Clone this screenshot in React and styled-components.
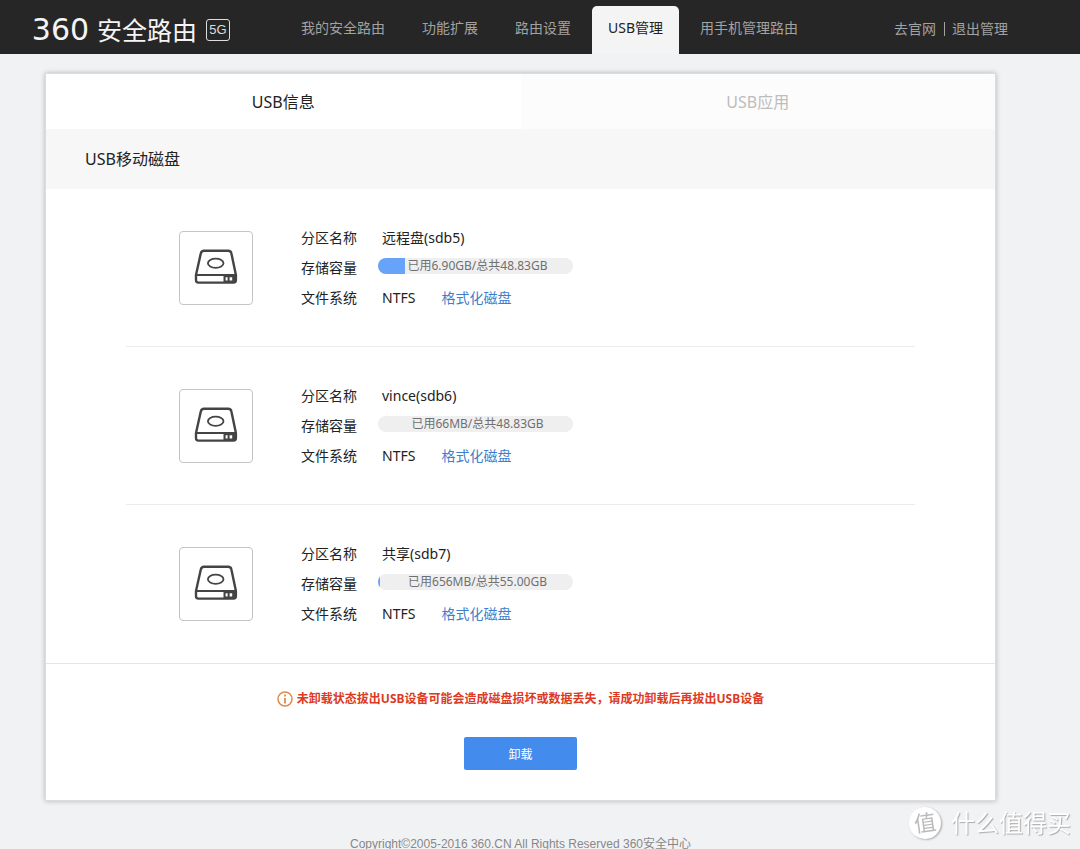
import React from "react";
import styled, { createGlobalStyle } from "styled-components";

const GlobalStyle = createGlobalStyle`
  *, *::before, *::after { box-sizing: border-box; }
  body {
    margin: 0;
    background: #f1f2f4;
    color: #222;
    font-family: "Noto Sans", "Noto Sans CJK SC", sans-serif;
    font-size: 14px;
  }
  button { font-family: inherit; border: 0; cursor: pointer; }
  a { text-decoration: none; }
`;

const Header = styled.header`
  display: flex;
  align-items: center;
  height: 54px;
  padding-left: 24px;
  background: #262626;
`;

const Logo = styled.a`
  display: flex;
  align-items: center;
  width: 261px;
  flex: none;
  color: #f4f4f4;
  line-height: 28px;
  padding-top: 6px;
`;

const LogoDigits = styled.span`
  width: 73px;
  text-align: center;
  font-family: "DejaVu Sans", sans-serif;
  font-size: 30px;
`;

const LogoName = styled.span`
  font-size: 25px;
`;

const LogoBadge = styled.span`
  margin-left: 9px;
  width: 24px;
  height: 22px;
  border: 1px solid #ddd;
  border-radius: 3px;
  color: #ddd;
  font-family: "Liberation Sans", sans-serif;
  font-size: 13px;
  line-height: 20px;
  text-align: center;
`;

const Nav = styled.nav`
  display: flex;
  align-self: flex-end;
  gap: 5px;
`;

const NavLink = styled.a`
  height: 48px;
  padding: 0 16px;
  border-radius: 5px 5px 0 0;
  line-height: 44px;
  white-space: nowrap;
  color: ${(p) => (p.$active ? "#222" : "#a2a2a2")};
  background: ${(p) => (p.$active ? "#f4f4f4" : "transparent")};
`;

const UserLinks = styled.div`
  display: flex;
  align-items: center;
  margin-left: auto;
  margin-right: 72px;
  padding-top: 4px;
`;

const UserLink = styled.a`
  color: #a2a2a2;
  line-height: 14px;
  white-space: nowrap;
  & + & {
    margin-left: 8px;
    padding-left: 7px;
    border-left: 1px solid #a2a2a2;
  }
`;

const Main = styled.main`
  margin: 19px 84px 0 45px;
`;

const Card = styled.section`
  background: #fff;
  border: 1px solid #dcdcdc;
  box-shadow: 0 0 5px rgba(0, 0, 0, 0.25);
`;

const Tabs = styled.div`
  display: grid;
  grid-template-columns: 1fr 1fr;
`;

const Tab = styled.button`
  height: 55px;
  padding: 0 0 2px;
  font-size: 16px;
  color: ${(p) => (p.$active ? "#222" : "#bdbdbd")};
  background: ${(p) => (p.$active ? "#fff" : "#fcfcfc")};
`;

const SectionTitle = styled.h2`
  margin: 0;
  padding: 0 39px;
  background: #f7f7f7;
  font-size: 16px;
  font-weight: 400;
  line-height: 60px;
`;

const DiskList = styled.ul`
  margin: 0;
  padding: 0 0 1px;
  list-style: none;
  border-bottom: 1px solid #e6e6e6;
`;

const DiskRow = styled.li`
  display: flex;
  align-items: center;
  margin: 0 80px;
  padding: 42px 53px 41px;
  & + & {
    border-top: 1px solid #ececec;
  }
`;

const DiskThumb = styled.div`
  display: flex;
  align-items: center;
  justify-content: center;
  width: 74px;
  height: 74px;
  margin-right: 48px;
  border: 1px solid #c4c4c4;
  border-radius: 4px;
`;

const Facts = styled.dl`
  display: grid;
  grid-template-columns: 77px 195px;
  align-items: center;
  margin: -8px 0;
  line-height: 30px;
`;

const Value = styled.dd`
  margin: 0;
  padding-left: ${(p) => (p.$flush ? 0 : 4)}px;
`;

const Meter = styled.div`
  position: relative;
  height: 16px;
  margin-bottom: 4px;
  border-radius: 8px;
  overflow: hidden;
  background: #efefef;
`;

const MeterFill = styled.div`
  position: absolute;
  inset: 0 auto 0 0;
  background: #67a3f8;
`;

const MeterText = styled.span`
  position: relative;
  display: block;
  padding-left: 4px;
  color: #707070;
  font-size: 12px;
  line-height: 15px;
  text-align: center;
  white-space: nowrap;
`;

const FormatLink = styled.a`
  margin-left: 26px;
  color: #3d7fcb;
`;

const Actions = styled.div`
  display: flex;
  flex-direction: column;
  align-items: center;
  gap: 29px;
  padding: 26px 0 30px;
`;

const Warning = styled.p`
  display: flex;
  align-items: center;
  gap: 4px;
  margin: 0;
  color: #dd3a24;
  font-size: 12px;
  font-weight: 700;
  line-height: 18px;
`;

const UnmountButton = styled.button`
  width: 113px;
  height: 33px;
  padding: 0;
  border-radius: 2px;
  background: #438bed;
  color: #fff;
  font-size: 12px;
`;

const Footer = styled.footer`
  margin: 35px 84px 0 45px;
  color: #888;
  font-family: "Liberation Sans", "Noto Sans CJK SC", sans-serif;
  font-size: 12px;
  line-height: 16px;
  text-align: center;
`;

const Watermark = styled.div`
  position: fixed;
  right: 9px;
  bottom: 10px;
  display: flex;
  align-items: center;
  gap: 10px;
  color: #fff;
  font-size: 24px;
  line-height: 32px;
  text-shadow: 1px 1px 1px #aaa;
`;

const WatermarkSeal = styled.span`
  width: 32px;
  height: 32px;
  border-radius: 50%;
  background: #fff;
  box-shadow: 1px 1px 2px #aaa;
  color: #bbb;
  font-size: 22px;
  line-height: 30px;
  text-align: center;
  text-shadow: none;
  transform: rotate(-8deg);
`;

const DiskIcon = () => (
  <svg width="44" height="38" viewBox="0 0 44 38" fill="none" stroke="#444" aria-hidden="true">
    <path d="M10 1.800h24.200c2 0 2.900.9 3.200 2.600L41.900 26v5c0 1.700-.8 2.600-2.400 2.600h-35C2.900 33.600 2 32.700 2 31v-5L6.800 4.400C7.200 2.700 8.200 1.800 10 1.800z" strokeWidth="2.400" strokeLinejoin="round" />
    <path d="M2 26h40" strokeWidth="2.200" />
    <path d="M29.500 26h12.300v7H29.500z" fill="#444" stroke="none" />
    <path d="M31.600 28.200h2v3.200h-2zM35.600 28.200h2.600v3.200h-2.600z" fill="#fff" stroke="none" />
    <ellipse cx="21.700" cy="14.300" rx="7.800" ry="4.600" strokeWidth="1.800" />
  </svg>
);

const InfoIcon = () => (
  <svg width="16" height="16" viewBox="0 0 16 16" fill="none" stroke="#e08a4a" aria-hidden="true">
    <circle cx="8" cy="8" r="7" strokeWidth="1.500" />
    <path d="M8 3.500v2M8 7v5.500" strokeWidth="1.800" />
  </svg>
);

const navItems = ["我的安全路由", "功能扩展", "路由设置", "USB管理", "用手机管理路由"];

const disks = [
  { name: "远程盘(sdb5)", used: "6.90GB", total: "48.83GB", percent: 14 },
  { name: "vince(sdb6)", used: "66MB", total: "48.83GB", percent: 0 },
  { name: "共享(sdb7)", used: "656MB", total: "55.00GB", percent: 1 },
];

function Disk({ name, used, total, percent }) {
  return (
    <DiskRow>
      <DiskThumb>
        <DiskIcon />
      </DiskThumb>
      <Facts>
        <dt>分区名称</dt>
        <Value>{name}</Value>
        <dt>存储容量</dt>
        <Value $flush>
          <Meter role="meter" aria-label="存储容量" aria-valuemin={0} aria-valuemax={100} aria-valuenow={percent}>
            <MeterFill style={{ width: `${percent}%` }} />
            <MeterText>{`已用${used}/总共${total}`}</MeterText>
          </Meter>
        </Value>
        <dt>文件系统</dt>
        <Value>
          NTFS
          <FormatLink href="#format">格式化磁盘</FormatLink>
        </Value>
      </Facts>
    </DiskRow>
  );
}

export default function App() {
  return (
    <>
      <GlobalStyle />
      <Header>
        <Logo href="#home">
          <LogoDigits>360</LogoDigits>
          <LogoName>安全路由</LogoName>
          <LogoBadge>5G</LogoBadge>
        </Logo>
        <Nav>
          {navItems.map((item) => (
            <NavLink key={item} href="#nav" $active={item === "USB管理"}>
              {item}
            </NavLink>
          ))}
        </Nav>
        <UserLinks>
          <UserLink href="#site">去官网</UserLink>
          <UserLink href="#logout">退出管理</UserLink>
        </UserLinks>
      </Header>
      <Main>
        <Card>
          <Tabs role="tablist">
            <Tab role="tab" aria-selected="true" $active>USB信息</Tab>
            <Tab role="tab" aria-selected="false">USB应用</Tab>
          </Tabs>
          <SectionTitle>USB移动磁盘</SectionTitle>
          <DiskList>
            {disks.map((disk) => (
              <Disk key={disk.name} {...disk} />
            ))}
          </DiskList>
          <Actions>
            <Warning>
              <InfoIcon />
              未卸载状态拔出USB设备可能会造成磁盘损坏或数据丢失，请成功卸载后再拔出USB设备
            </Warning>
            <UnmountButton>卸载</UnmountButton>
          </Actions>
        </Card>
      </Main>
      <Footer>Copyright©2005-2016 360.CN All Rights Reserved 360安全中心</Footer>
      <Watermark>
        <WatermarkSeal>值</WatermarkSeal>
        什么值得买
      </Watermark>
    </>
  );
}
